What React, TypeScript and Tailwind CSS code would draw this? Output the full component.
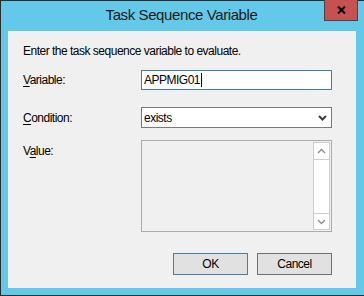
const font = "font-['Liberation_Sans','Segoe_UI',sans-serif]"

function Chevron({ up }: { up?: boolean }) {
  return (
    <svg width="9" height="6" viewBox="0 0 9 6" className="block">
      <path
        d={up ? 'M1 5L4.5 1.5L8 5' : 'M1 1L4.5 4.5L8 1'}
        fill="none"
        stroke="#8a8a8a"
        strokeWidth={1.3}
      />
    </svg>
  )
}

export default function App() {
  return (
    <div className={`${font} w-[364px] h-[296px] bg-[#64c9e9] border-l border-t border-b border-[#2b2b2b] pl-[7px] pr-[8px] pb-[7px] flex flex-col`}>
      {/* title bar */}
      <div className="relative h-[30px] shrink-0">
        <div className="text-center text-[15px] leading-[28px] text-[#1b1b1b] pr-[1px] tracking-[-0.4px]">
          Task Sequence Variable
        </div>
        <div className="absolute right-[-2px] top-[-1px] w-[34px] h-[21px] bg-[#c75050] border-x border-b border-[#464646] flex items-center justify-center">
          <svg width="9" height="8" viewBox="0 0 9 8">
            <path d="M1 0.5L8 7.5M8 0.5L1 7.5" stroke="#000" strokeWidth={2} />
          </svg>
        </div>
      </div>

      {/* client area */}
      <div className="flex-1 bg-[#f0f0f0] pl-[15px] pt-[12px] text-[12px] tracking-[-0.5px] text-[#000] flex flex-col">
        <div className="leading-[16px] h-[17px]">Enter the task sequence variable to evaluate.</div>

        <div className="flex items-center mt-[10px]">
          <div className="w-[118px]">
            <span className="underline underline-offset-2">V</span>ariable:
          </div>
          <div className="w-[191px] h-[20px] bg-white border border-[#3c7fb1] flex items-center pl-[2px] leading-none">
            APPMIG01
            <span className="inline-block w-px h-[14px] bg-black ml-px" />
          </div>
        </div>

        <div className="flex items-center mt-[17px]">
          <div className="w-[118px]">
            <span className="underline underline-offset-2">C</span>ondition:
          </div>
          <div className="w-[191px] h-[21px] bg-white border border-[#7a7a7a] flex items-center justify-between pl-[2px] pr-[4px]">
            <span>exists</span>
            <svg width="9" height="6" viewBox="0 0 9 6">
              <path d="M1 1L4.5 4.5L8 1" fill="none" stroke="#3c3c3c" strokeWidth={2} />
            </svg>
          </div>
        </div>

        <div className="flex mt-[12px]">
          <div className="w-[118px] pt-[3px] leading-[16px]">
            V<span className="underline underline-offset-2">a</span>lue:
          </div>
          <div className="w-[191px] h-[92px] border border-[#acacac] flex justify-end pt-px pr-px pb-px">
            <div className="w-[17px] bg-white border border-[#cdcdcd] flex flex-col">
              <div className="h-[17px] border-b border-[#cdcdcd] flex items-center justify-center">
                <Chevron up />
              </div>
              <div className="flex-1" />
              <div className="h-[16px] border-t border-[#cdcdcd] flex items-center justify-center">
                <Chevron />
              </div>
            </div>
          </div>
        </div>

        <div className="flex gap-[9px] pl-[150px] mt-[21px]">
          <div className="w-[75px] h-[22px] bg-[#e1e1e1] border border-[#3c7fb1] flex items-center justify-center">
            OK
          </div>
          <div className="w-[75px] h-[22px] bg-[#e1e1e1] border border-[#707070] flex items-center justify-center">
            Cancel
          </div>
        </div>
      </div>
    </div>
  )
}
